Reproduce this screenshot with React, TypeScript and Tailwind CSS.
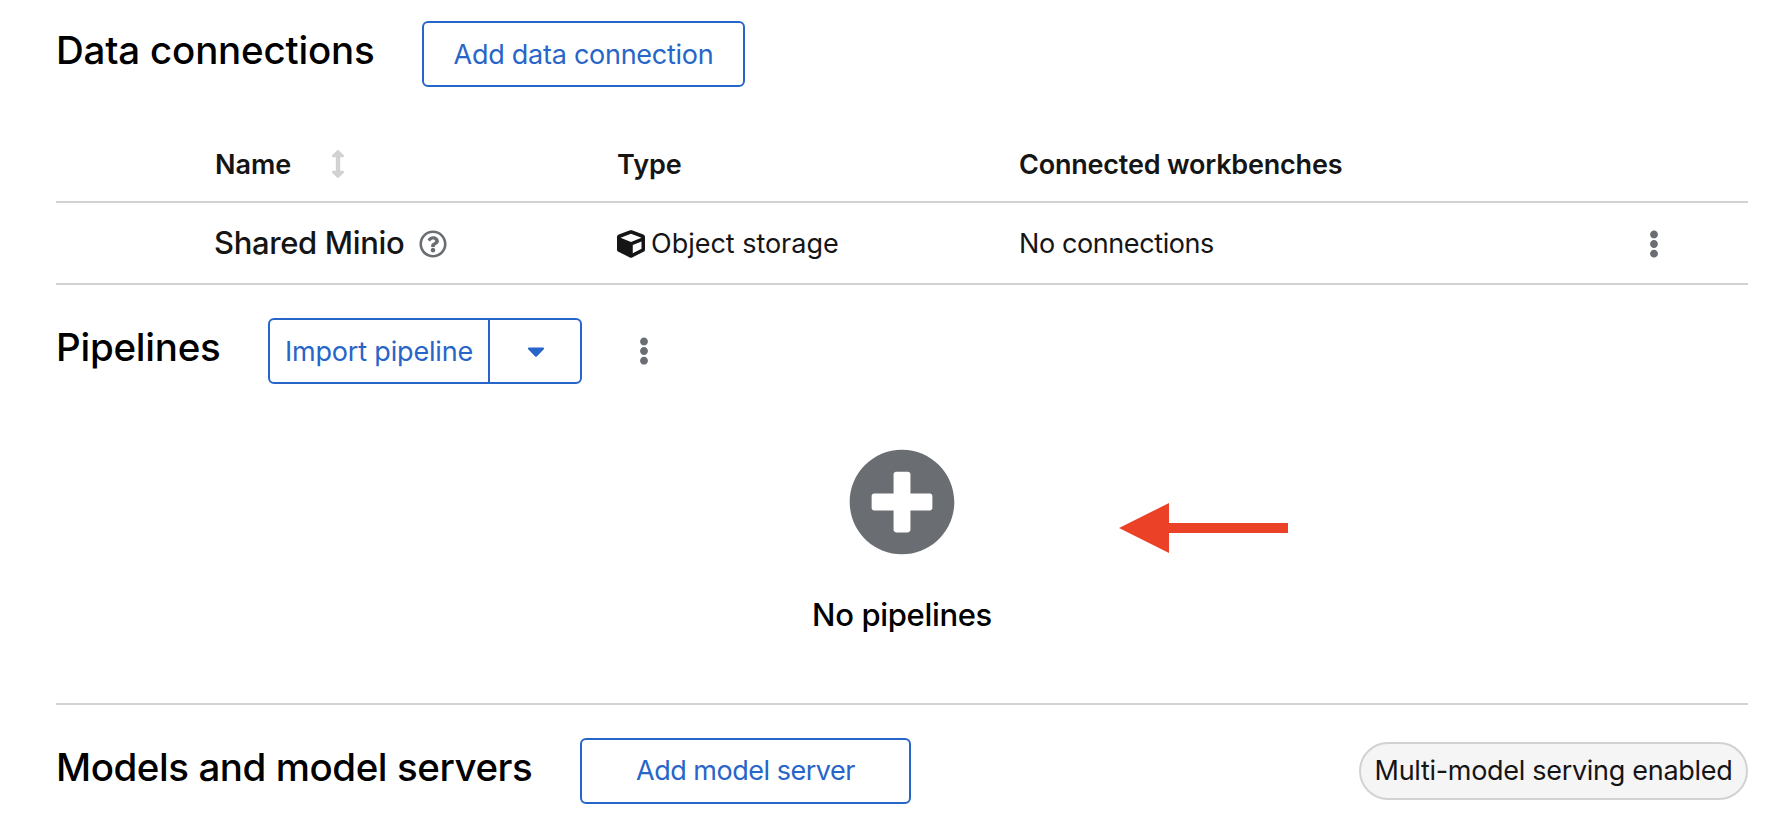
import { FaArrowsAltV, FaCaretDown, FaCube, FaEllipsisV, FaPlusCircle, FaRegQuestionCircle } from 'react-icons/fa';

function Kebab({ label }: { label: string }) {
  return (
    <button aria-label={label} className="flex w-[28px] justify-center text-[#6a6e73]">
      <FaEllipsisV className="h-[28px] w-[28px]" />
    </button>
  );
}

function DataConnections() {
  return (
    <section>
      <header className="flex h-[66px] items-start">
        <h2 className="w-[366px] whitespace-nowrap text-[38.5px] leading-[58px] font-medium tracking-[-0.2px] text-black">
          Data connections
        </h2>
        <button className="h-[66px] w-[323px] rounded-[6px] border-2 border-[#2865c9] pt-[2px] text-[27px] tracking-[-0.26px] text-[#2865c9]">
          Add data connection
        </button>
      </header>
      <div className="mt-[39px] grid h-[77px] grid-cols-[159px_402px_402px_1fr] items-center border-b-2 border-[#d2d2d2] text-[27px] font-semibold">
        <span />
        <div className="flex items-center">
          <span className="w-[109px] pt-[3px]">Name</span>
          <FaArrowsAltV className="h-[28px] w-[28px] text-[#d2d2d2]" />
        </div>
        <span className="pt-[3px]">Type</span>
        <span className="pt-[3px] tracking-[-0.2px]">Connected workbenches</span>
      </div>
      <div className="grid h-[82px] grid-cols-[159px_402px_402px_1fr_108px] items-center border-b-2 border-[#d2d2d2] pt-px text-[27px]">
        <span />
        <div className="flex items-center">
          <span className="-ml-px w-[205px] pb-px text-[31px] leading-[46px] font-medium tracking-[-0.36px]">Shared Minio</span>
          <FaRegQuestionCircle className="h-[28px] w-[28px] text-[#6a6e73]" />
        </div>
        <div className="flex items-center gap-[6px]">
          <FaCube className="h-[28px] w-[28px]" />
          <span className="pt-[2px] tracking-[-0.02px]">Object storage</span>
        </div>
        <span className="pt-[2px] tracking-[-0.4px]">No connections</span>
        <Kebab label="Connection actions" />
      </div>
    </section>
  );
}

function Pipelines() {
  return (
    <section className="mt-[33px] border-b-2 border-[#d2d2d2] pb-[65px]">
      <header className="flex h-[66px] items-start">
        <h2 className="w-[212px] text-[38.5px] leading-[58px] font-medium tracking-[-0.24px] text-black">Pipelines</h2>
        <div className="flex h-[66px] w-[314px] rounded-[6px] border-2 border-[#2865c9] text-[#2865c9]">
          <button className="w-[220px] border-r-2 border-[#2865c9] pt-[2px] text-[27px] tracking-[-0.18px] whitespace-nowrap">
            Import pipeline
          </button>
          <button aria-label="More import options" className="flex flex-1 items-center justify-center pl-[2px]">
            <FaCaretDown className="h-[28px] w-[28px]" />
          </button>
        </div>
        <div className="ml-[48px] flex h-[66px] items-center">
          <Kebab label="Pipeline actions" />
        </div>
      </header>
      <div className="relative mt-[64px] flex flex-col items-center">
        <FaPlusCircle className="h-[108px] w-[108px] text-[#6a6e73]" />
        <h3 className="mt-[36px] text-[31px] leading-[46px] font-medium tracking-[-0.34px] text-black">No pipelines</h3>
        <svg className="absolute top-[55px] left-[1063px]" width="170" height="50" viewBox="0 0 170 50" fill="#eb4126">
          <path d="M0 25 50 0v20h119v10H50v20z" />
        </svg>
      </div>
    </section>
  );
}

function ModelServers() {
  return (
    <section className="mt-[33px] flex h-[66px] items-start">
      <h2 className="w-[524px] whitespace-nowrap text-[38.5px] leading-[58px] font-medium tracking-[-0.44px] text-black">
        Models and model servers
      </h2>
      <button className="h-[66px] w-[331px] rounded-[6px] border-2 border-[#2865c9] pt-px text-[27px] tracking-[-0.48px] text-[#2865c9]">
        Add model server
      </button>
      <span className="mt-[4px] ml-auto flex h-[58px] w-[389px] items-center justify-center rounded-full border-2 border-[#d2d2d2] bg-[#f5f5f5] text-[27px] tracking-[-0.3px] whitespace-nowrap">
        Multi-model serving enabled
      </span>
    </section>
  );
}

export default function App() {
  return (
    <main className="h-[840px] w-[1774px] overflow-hidden bg-white pt-[21px] pr-[26px] pl-[56px] font-['Inter',sans-serif] text-[#151515]">
      <DataConnections />
      <Pipelines />
      <ModelServers />
    </main>
  );
}
